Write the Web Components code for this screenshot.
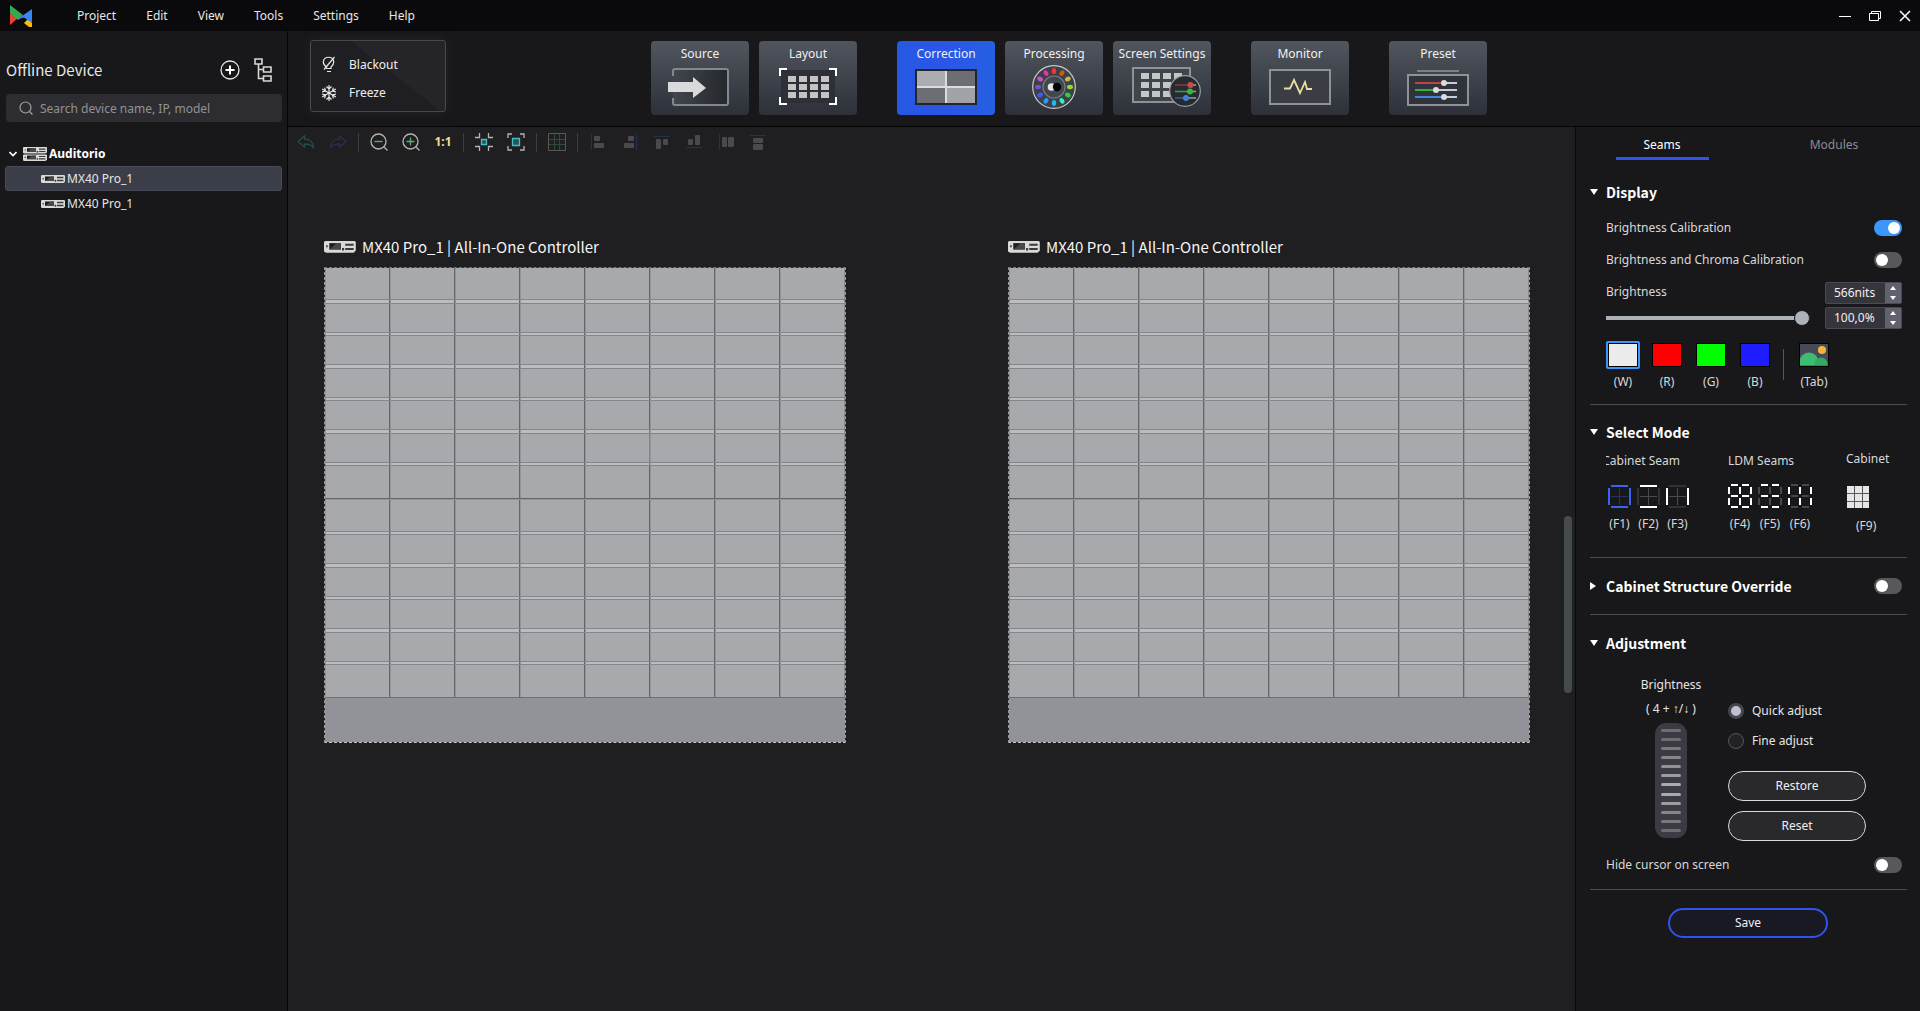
<!DOCTYPE html>
<html lang="en">
<head>
<meta charset="utf-8">
<title>Screen Correction</title>
<style>
html,body{margin:0;height:100%;background:#18181a}
body{font:12px/16px "Noto Sans","Open Sans",sans-serif;color:#e6e6e8;--head:"Noto Sans CJK SC","Noto Sans",sans-serif}
</style>
</head>
<body>
<control-app></control-app>
<script>
const define=(name,html,init)=>{
  const t=document.createElement('template');
  t.innerHTML=`<style>*{box-sizing:border-box}button,input{font:inherit;color:inherit;margin:0}button{background:none;border:0;padding:0}</style>`+html;
  customElements.define(name,class extends HTMLElement{
    connectedCallback(){
      if(this.shadowRoot)return;
      this.attachShadow({mode:'open'}).append(t.content.cloneNode(true));
      if(init)init(this,this.shadowRoot);
    }
  });
};

/* ---------- icons: [width, height, markup] ---------- */
const alignBox='fill="#4a4a4d"';
const device='<path fill="#d9d9d9" d="M1 0H29L30 1V9L28 11H2L0 10V1z"/><path fill="#1c1c1c" d="M5 2H16V8H5z"/><path fill="#454a45" d="M5 8L12 2H16V8z"/><path fill="#3a3a3a" d="M2 4h1.500v2H2zM17 6.500h2V9h-2zM20 2.500h8V4.500h-8zM20 6.500h8V8.500h-8z"/>';
const cells=(x,y,w,h,dx,dy)=>{let s='';for(let r=0;r<3;r++)for(let c=0;c<4;c++)s+=`<rect x="${x+c*dx}" y="${y+r*dy}" width="${w}" height="${h}"/>`;return s};
const hues=['#f23a35','#c8600f','#c9b93c','#8ae02a','#2fce3d','#2ef2c2','#23b8ee','#2b9df0','#3b5df5','#7a4ed0','#cf4fc4','#ee2fa8'];
const petals=hues.map((c,i)=>`<ellipse cx="22" cy="6" rx="2.200" ry="3" fill="${c}" transform="rotate(${i*30} 22 22)"/>`).join('');
const seam=(outH,outV,mid)=>`<g fill="none"><path stroke="${mid}" d="M3 11.500H20M11.500 3V20"/><path stroke="${outH}" stroke-width="${outH===mid?1:2}" d="M3 1H20M3 22H20"/><path stroke="${outV}" stroke-width="${outV===mid?1:2}" d="M1 3V20M22 3V20"/></g>`;
const ldm=(h,v)=>{const w=c=>c==='#fff'?2:1;return `<g fill="none"><path stroke="${v}" stroke-width="${w(v)}" d="M1 3V10M1 14V21M12 3V10M12 14V21M23 3V10M23 14V21"/><path stroke="${h}" stroke-width="${w(h)}" d="M3 1H10M14 1H21M3 12H10M14 12H21M3 23H10M14 23H21"/></g>`};
const ICONS={
 logo:[22,22,'<path fill="#ea4335" d="M0 8L8 13L0 20z"/><path fill="#fbbc05" d="M14 18L18 14L22 18V22H19z"/><path fill="#34a853" d="M0 0L13 10L8 15L0 8z"/><path fill="#3b82f6" d="M22 4V18L14 12.500L7 14.500L12 11z"/>'],
 min:[12,12,'<path stroke="#fff" d="M0 6.500H12"/>'],
 restore:[12,12,'<path fill="none" stroke="#fff" d="M.5 3.500H9.500V10.500H.5zM2.500 3.500V1.500H11.500V8.500H9.500"/>'],
 close:[12,12,'<path stroke="#fff" stroke-width="1.500" d="M1 1L11 11M11 1L1 11"/>'],
 add:[20,20,'<circle cx="10" cy="10" r="9" fill="none" stroke="#e8e8e8" stroke-width="1.300"/><path stroke="#fff" stroke-width="2" d="M10 5.500V14.500M5.500 10H14.500"/>'],
 tree:[18,24,'<path fill="none" stroke="#d8d8d8" stroke-width="1.600" d="M1 1H8V6H1zM4.500 6V20.500H9.500M4.500 11.500H9.500M9.500 9H17V14H9.500zM9.500 18H17V23H9.500z"/>'],
 search:[14,14,'<circle cx="6.500" cy="6.500" r="5.500" fill="none" stroke="#a0a0a4" stroke-width="1.200"/><path stroke="#a0a0a4" stroke-width="1.200" d="M10.500 10.500L13.500 13.500"/>'],
 chevron:[8,6,'<path fill="none" stroke="#fff" stroke-width="1.600" d="M.5 1L4 4.500L7.500 1"/>'],
 dev:[32,12,`<g transform="scale(1.060)">${device}</g>`], 
 devs:[24,8,`<g transform="scale(.8 .74)">${device}</g>`],
 stack:[24,14,`<g transform="scale(.8 .6)">${device}</g><g transform="translate(0 7.400) scale(.8 .6)">${device}</g>`],
 bulb:[14,17,'<g fill="none" stroke="#e8e8e8" stroke-width="1.200"><path d="M4.500 12.500V11C2 9.500 1.300 8 1.300 5.800A5.300 5.300 0 0 1 11.800 5.800C11.800 8 11 9.500 9 11V12.500"/><path d="M12.500 1L2 13.500M4.500 12.500H9.500M5 15.500H9"/></g>'],
 snow:[16,16,'<g fill="none" stroke="#e8e8e8" stroke-width="1.200">'+[0,60,120].map(a=>`<path transform="rotate(${a} 8 8)" d="M8 0V16M5.500 1.500L8 4L10.500 1.500M5.500 14.500L8 12L10.500 14.500"/>`).join('')+'</g>'],
 undo:[18,14,'<path fill="none" stroke="#1f4d50" stroke-width="1.300" d="M1 6.500L7.500 1V4C13 4.200 16.500 7.500 16.500 12.500C14.500 9.800 11.500 9 7.500 9V12z"/>'],
 redo:[18,14,'<path fill="none" stroke="#26314e" stroke-width="1.300" d="M17 6.500L10.500 1V4C5 4.200 1.500 7.500 1.500 12.500C3.500 9.800 6.500 9 10.500 9V12z"/>'],
 zout:[18,18,'<g fill="none" stroke="#b4b4b6" stroke-width="1.300"><circle cx="8.500" cy="8.500" r="7.500"/><path d="M14 14L17.500 17.500"/></g><path stroke="#5fae6c" stroke-width="1.300" d="M4.500 8.500H12.500"/>'],
 zin:[18,18,'<g fill="none" stroke="#b4b4b6" stroke-width="1.300"><circle cx="8.500" cy="8.500" r="7.500"/><path d="M14 14L17.500 17.500"/></g><path stroke="#5fae6c" stroke-width="1.300" d="M4.500 8.500H12.500M8.500 4.500V12.500"/>'],
 shrink:[18,18,'<path fill="none" stroke="#b4b4b6" stroke-width="1.300" d="M0 4.500H4.500V0M13.500 0V4.500H18M18 13.500H13.500V18M4.500 18V13.500H0"/><path fill="#2a5357" stroke="#3fc1c6" stroke-width="1.300" d="M6.500 6.500H11.500V11.500H6.500z"/>'],
 expand:[18,18,'<path fill="none" stroke="#b4b4b6" stroke-width="1.300" d="M1 5V1H5M13 1H17V5M17 13V17H13M5 17H1V13"/><path fill="#2a5357" stroke="#3fc1c6" stroke-width="1.300" d="M5.500 5.500H12.500V12.500H5.500z"/>'],
 grid:[18,18,'<g fill="none"><path stroke="#304a38" d="M6.500 1V17M11.500 1V17M1 6.500H17M1 11.500H17"/><path stroke="#58585c" d="M.5 .5H17.500V17.500H.5z"/></g>'],
 al:[16,16,`<path stroke="#263150" d="M1.500 0V16"/><g ${alignBox}><rect x="4" y="2" width="6" height="5" rx="1"/><rect x="4" y="9" width="10" height="5" rx="1"/></g>`],
 ar:[16,16,`<path stroke="#263150" d="M14.500 0V16"/><g ${alignBox}><rect x="6" y="2" width="6" height="5" rx="1"/><rect x="2" y="9" width="10" height="5" rx="1"/></g>`],
 at:[16,16,`<path stroke="#263150" d="M0 2.500H16"/><g ${alignBox}><rect x="2" y="5" width="5" height="10" rx="1"/><rect x="9" y="5" width="5" height="6" rx="1"/></g>`],
 ab:[16,16,`<path stroke="#263150" d="M0 13.500H16"/><g ${alignBox}><rect x="2" y="5" width="5" height="6" rx="1"/><rect x="9" y="1" width="5" height="10" rx="1"/></g>`],
 dh:[16,16,`<path stroke="#263150" d="M1.500 0V16"/><g ${alignBox}><rect x="4" y="3" width="5" height="10" rx="1"/><rect x="10" y="3" width="6" height="10" rx="1"/></g>`],
 dv:[16,16,`<path stroke="#263150" d="M0 1.500H16"/><g ${alignBox}><rect x="3" y="4" width="10" height="5" rx="1"/><rect x="3" y="10" width="10" height="6" rx="1"/></g>`],
 source:[66,38,'<defs><linearGradient id="g"><stop offset="0" stop-color="#42464e"/><stop offset="1" stop-color="#24272b"/></linearGradient></defs><path fill="url(#g)" d="M6 1H61V37H6z"/><path fill="none" stroke="#84878b" stroke-width="2" d="M6 8V3Q6 1 8 1H59Q61 1 61 3V35Q61 37 59 37H8Q6 37 6 35V30"/><path fill="#d9dadc" d="M1 14H26V9L39 20L26 30V24H1z"/>'],
 layout:[58,37,'<path fill="#2d3036" d="M2 2H56V35H2z"/><path fill="none" stroke="#fff" stroke-width="2" d="M1 8V1H8M50 1H57V8M57 29V36H50M8 36H1V29"/><g fill="#c5c4c5">'+cells(9,8,8,6,11,8)+'</g>'],
 correction:[62,36,'<path fill="#22252c" d="M0 0H62V36H0z"/><path fill="#abadb1" d="M2 2H30V17H2z"/><path fill="#6c6e73" d="M32 2H60V17H32zM2 19H30V34H2z"/><path fill="#a1a3a7" d="M32 19H60V34H32z"/><path fill="#dcdcdf" d="M30 2H32V34H30zM2 17H60V19H2z"/>'],
 processing:[44,44,'<circle cx="22" cy="22" r="21.300" fill="#3c4048" stroke="#c7c9cc" stroke-width="1.200"/>'+petals+'<circle cx="22" cy="22" r="11" fill="#42464d" stroke="#787b80" stroke-width="1.200"/><circle cx="19.500" cy="22" r="3.800" fill="#e8e4e4"/><circle cx="25" cy="22" r="4.200" fill="#000"/>'],
 screens:[78,40,'<g transform="translate(8 0)"><path fill="#40444b" stroke="#8e9196" stroke-width="2" d="M2 1H59V35H2z"/><g fill="#c5c6c8">'+cells(10,6,8,6,11,9)+'</g><circle cx="54" cy="24" r="15.300" fill="#272b31" stroke="#9b9da1" stroke-width="1.200"/><path stroke="#9b9da1" stroke-width="1.500" d="M58 18H65M58 24.500H65M54 31H65"/><path stroke="#8c3a3f" stroke-width="1.500" d="M44 18H58"/><path stroke="#2fa63a" stroke-width="1.500" d="M44 24.500H58"/><path stroke="#34629e" stroke-width="1.500" d="M44 31H55"/><circle cx="59.500" cy="18" r="3" fill="#d04a4a"/><circle cx="59" cy="24.500" r="3" fill="#34b83c"/><circle cx="55" cy="31" r="3" fill="#3f82d8"/></g>'],
 monitor:[62,36,'<path fill="#3a3d44" stroke="#8e9196" stroke-width="2" d="M1 1H61V35H1z"/><path fill="none" stroke="#e7df9e" stroke-width="1.800" d="M15 19.500H21L25 11L31 24L36 13L38 20H43"/>'],
 preset:[62,38,'<path stroke="#7d8087" stroke-width="2" d="M10 3H52"/><path fill="#30333a" stroke="#8e9196" stroke-width="2" d="M1 7H61V37H1z"/><path stroke="#c3ccd8" stroke-width="2" d="M8 15H50M8 22H50M8 29H50"/><path stroke="#bf4347" stroke-width="2" d="M8 15H37"/><path stroke="#33b238" stroke-width="2" d="M8 22H29"/><path stroke="#4387dc" stroke-width="2" d="M8 29H37"/><g fill="#dcdcde"><circle cx="37" cy="15" r="3"/><circle cx="29" cy="22" r="3"/><circle cx="37" cy="29" r="3"/></g>'],
 down:[8,6,'<path fill="#fff" d="M0 0H8L4 6z"/>'],
 right:[6,8,'<path fill="#fff" d="M0 0L6 4L0 8z"/>'],
 f1:[23,23,seam('#3c63f0','#3c63f0','#26335f')],
 f2:[23,23,seam('#fff','#4a4a4e','#4a4a4e')],
 f3:[23,23,seam('#4a4a4e','#fff','#4a4a4e')],
 f4:[24,24,ldm('#fff','#fff')], f5:[24,24,ldm('#fff','#77777a')], f6:[24,24,ldm('#77777a','#fff')],
 f9:[22,22,'<path fill="#e6e6e6" d="M0 0H22V22H0z"/><path stroke="#58585a" d="M7.500 0V22M15.500 0V22M0 7.500H22M0 15.500H22"/>'],
 scene:[28,22,'<path fill="#474b58" d="M0 0H28V22H0z"/><circle cx="22" cy="6" r="4" fill="#f2b43c"/><circle cx="9" cy="18" r="9.500" fill="#3dbd74"/><circle cx="21" cy="20" r="6.500" fill="#35a764"/><path fill="#2b8f55" d="M0 21H28V22H0z"/>']
};
define('ui-icon','<style>:host{display:block;flex:none;line-height:0}svg{display:block;overflow:hidden}</style>',(el,r)=>{
  const [w,h,m]=ICONS[el.getAttribute('name')];
  r.innerHTML+=`<svg width="${w}" height="${h}" viewBox="0 0 ${w} ${h}" aria-hidden="true">${m}</svg>`;
});

/* ---------- small controls ---------- */
define('toggle-switch',`<style>
:host{display:flex;align-items:center;justify-content:space-between;min-height:16px}
input{appearance:none;width:28px;height:16px;border-radius:8px;background:#58585a;display:flex;align-items:center;padding:0 2px;flex:none}
input::before{content:"";width:12px;height:12px;border-radius:50%;background:#fff}
input:checked{background:#3b97fb;justify-content:flex-end}
</style><label for="t"><slot></slot></label><input id="t" type="checkbox" role="switch">`,(el,r)=>{
  const i=r.querySelector('input');i.checked=el.hasAttribute('on');i.ariaLabel=el.textContent||el.getAttribute('label');});

define('spin-box',`<style>
:host{display:flex;width:77px;height:22px;border:1px solid #4a4a54;border-radius:2px;background:#35353c}
input{width:59px;border:0;background:none;padding:0 0 0 8px;outline:0;color:#f0f0f0}
div{flex:1;display:flex;flex-direction:column;background:#62626e}
button{flex:1;display:flex;align-items:center;justify-content:center}
svg{display:block}
</style><input type="text"><div><button aria-label="Increase"><svg width="6" height="4"><path fill="#fff" d="M0 4L3 0L6 4z"/></svg></button><button aria-label="Decrease"><svg width="6" height="4"><path fill="#fff" d="M0 0H6L3 4z"/></svg></button></div>`,(el,r)=>{
  const i=r.querySelector('input');i.value=el.getAttribute('value');i.ariaLabel=el.getAttribute('label');});

define('pill-button',`<style>
:host{display:block}
button{width:100%;height:30px;border-radius:15px;border:1px solid #dadada;background:#29292b;color:#f0f0f0}
:host([primary]) button{border:2px solid #2f54eb;background:#191924}
</style><button><slot></slot></button>`);

define('color-swatch',`<style>
:host{display:block}
button{display:flex;flex-direction:column;align-items:center;gap:5px;width:34px}
i{display:block;width:34px;height:28px;padding:1px;border-radius:2px;border:1px solid transparent}
:host([selected]) i{border:2px solid #3b97fb;padding:0}
b{display:block;height:100%;border:1px solid #000;background:var(--c)}
</style><button><i><b><slot name="pic"></slot></b></i><slot></slot></button>`,(el)=>{el.style.setProperty('--c',el.getAttribute('color')||'#000')});

define('mode-button',`<style>
:host{display:block}
button{display:flex;flex-direction:column;align-items:center;gap:8px}
:host([lead]) button{align-items:flex-start;gap:9px}
:host([lead]) button>slot{display:block;margin-left:9px}
span{display:flex;height:24px;align-items:center}
</style><button><span></span><slot></slot></button>`,(el,r)=>{r.querySelector('span').innerHTML=`<ui-icon name="${el.getAttribute('icon')}"></ui-icon>`});

define('tool-card',`<style>
:host{display:block}
button{width:98px;height:74px;border-radius:4px;background:linear-gradient(#50555e,#2d3038);display:flex;flex-direction:column;align-items:center;color:#f0f0f2;padding:5px 0 4px;white-space:nowrap}
:host([active]) button{background:linear-gradient(90deg,#2559e2,#2c55e8 50%,#2560e0)}
span{flex:1;display:flex;align-items:center;justify-content:center}
</style><button><slot></slot><span></span></button>`,(el,r)=>{r.querySelector('span').innerHTML=`<ui-icon name="${el.getAttribute('icon')}"></ui-icon>`});

/* ---------- regions ---------- */
define('menu-bar',`<style>
:host{display:flex;align-items:center;height:31px;background:#0a0a0c;padding:0 9px 0 10px}
nav{display:flex;gap:30px;margin-left:45px;flex:1}
.w{display:flex;gap:18px}
.w button{display:block}
</style><ui-icon name="logo"></ui-icon><nav><button>Project</button><button>Edit</button><button>View</button><button>Tools</button><button>Settings</button><button>Help</button></nav>
<div class="w"><button aria-label="Minimise"><ui-icon name="min"></ui-icon></button><button aria-label="Restore"><ui-icon name="restore"></ui-icon></button><button aria-label="Close"><ui-icon name="close"></ui-icon></button></div>`);

define('device-list',`<style>
:host{display:block;background:#18181a;padding:27px 5px 0}
header{display:flex;align-items:center;gap:14px;height:24px;padding:0 10px 0 1px}
h1{flex:1;margin:0;font:15px/20px var(--head)}
header button{display:block}
.s{display:flex;align-items:center;gap:7px;height:28px;margin:12px 0 0 1px;padding:0 13px;background:#2d2d31;border-radius:4px}
input{flex:1;min-width:0;border:0;background:none;outline:0;padding:1px 0 0}
input::placeholder{color:#929296;opacity:1}
ul{list-style:none;margin:19px 0 0;padding:0}
li button{display:flex;align-items:center;width:100%;height:25px;gap:2px;padding-left:35px;border:1px solid transparent;border-radius:3px;white-space:nowrap}
li .p{padding-left:3px;gap:2px;font-weight:bold;color:#fff}
.p ui-icon+ui-icon{margin-left:4px}
li .sel{background:#3b3d49;border-color:#474a58}
</style>
<header><h1>Offline Device</h1><button aria-label="Add device"><ui-icon name="add"></ui-icon></button><button aria-label="Topology"><ui-icon name="tree"></ui-icon></button></header>
<label class="s"><ui-icon name="search"></ui-icon><input type="text" aria-label="Search" placeholder="Search device name, IP, model"></label>
<ul><li><button class="p"><ui-icon name="chevron"></ui-icon><ui-icon name="stack"></ui-icon>Auditorio</button></li>
<li><button class="sel"><ui-icon name="devs"></ui-icon>MX40 Pro_1</button></li>
<li><button><ui-icon name="devs"></ui-icon>MX40 Pro_1</button></li></ul>`);

define('top-ribbon',`<style>
:host{display:flex;align-items:flex-start;height:95px;padding:9px 0 0 22px;background:#18181a}
.q{width:136px;height:72px;border:1px solid #48484e;border-radius:3px;background:linear-gradient(38deg,#1f1f23 58%,#252529 58%);box-shadow:0 0 10px #232327;display:flex;flex-direction:column;justify-content:center;gap:4px;padding:5px 10px 0}
.q button{display:flex;align-items:center;gap:12px;height:24px;color:#f0f0f2}
.q span{width:16px;display:flex;justify-content:center}
.a{flex:205}.b{flex:433}
.g{display:flex;gap:40px;padding-top:1px}
.g div{display:flex;gap:10px}
</style>
<div class="q"><button><span><ui-icon name="bulb"></ui-icon></span>Blackout</button><button><span><ui-icon name="snow"></ui-icon></span>Freeze</button></div>
<div class="a"></div>
<div class="g"><div><tool-card icon="source">Source</tool-card><tool-card icon="layout">Layout</tool-card></div>
<div><tool-card icon="correction" active>Correction</tool-card><tool-card icon="processing">Processing</tool-card><tool-card icon="screens">Screen Settings</tool-card></div>
<div><tool-card icon="monitor">Monitor</tool-card></div><div><tool-card icon="preset">Preset</tool-card></div></div>
<div class="b"></div>`);

define('canvas-tools',`<style>
:host{display:flex;align-items:center;height:30px;padding-left:2px}
button{width:32px;height:24px;display:flex;align-items:center;justify-content:center}
.r{font:bold 12px/16px "Noto Sans",sans-serif;color:#f5dd8c}
hr{width:1px;height:19px;border:0;background:#3f3f43;margin:0 4px}
</style>`,(el,r)=>{
  const b=(n,l)=>`<button aria-label="${l}"><ui-icon name="${n}"></ui-icon></button>`;
  r.innerHTML+=b('undo','Undo')+b('redo','Redo')+'<hr>'+b('zout','Zoom out')+b('zin','Zoom in')+'<button class="r">1:1</button><hr>'+b('shrink','Fit content')+b('expand','Fit window')+'<hr>'+b('grid','Grid')+'<hr>'+b('al','Align left')+b('ar','Align right')+b('at','Align top')+b('ab','Align bottom')+b('dh','Distribute horizontally')+b('dv','Distribute vertically');
});

define('led-wall',`<style>
:host{display:block;width:522px}
h2{display:flex;align-items:center;gap:6px;height:20px;margin:0 0 10px;font:15px/20px var(--head);color:#f4f4f4;white-space:nowrap}
.w{background:#929398 padding-box;border:1px dashed #9c9ca0;border-top-color:#77777b;border-bottom-color:#c4c4c8}
.r,.s{display:grid;grid-template-columns:repeat(8,1fr)}
.r i,.s i{border-right:1px solid #646569;box-shadow:inset 1px 0 #939498}
.r{background:#a8a9ad;height:28px}
.r i:last-child,.s i:last-child{border-right-color:#8c8d91}
.s{background:#bcbcc1;border:1px solid #85868b;border-width:1px 0;height:4px}
.s.big{height:5px}
.s.one{height:2px;border:0;background:#646569;border-bottom:1px solid #95969a}
.r.first{height:31px}.r.tall{height:32px}.r.mid{height:31px}
.end{height:1px;background:#6f7074}
.base{height:44px}
.r .hot{position:relative;border-right-color:#2f9bf5}
.r .hot::after{content:"";position:absolute;right:-1px;top:-4px;bottom:-3px;width:1px;background:#2f9bf5}
</style><h2><ui-icon name="dev"></ui-icon><span><slot></slot></span></h2><div class="w"></div>`,(el,r)=>{
  const row=hot=>Array.from({length:8},(_,c)=>`<i${hot&&c===4?' class="hot"':''}></i>`).join('');
  const seams=['big','','big','','big','','one','','big','','big','','end'];
  const tall={0:'first',6:'tall',7:'mid',12:'tall'};
  let h='';
  seams.forEach((s,k)=>{
    h+=`<div class="r ${tall[k]||''}">${row(el.hasAttribute('hot')&&k===5)}</div>`;
    h+=s==='end'?'<div class="end"></div>':`<div class="s ${s}">${s==='one'?'':row(false)}</div>`;
  });
  r.querySelector('.w').innerHTML=h+'<div class="base"></div>';
});

define('work-canvas',`<style>
:host{display:block;position:relative;background:#1f1f21;overflow:hidden}
.c{display:flex;gap:162px;padding:80px 0 0 36px}
.bar{position:absolute;right:3px;top:44%;height:20%;width:8px;border-radius:4px;background:#454a4f}
</style><canvas-tools></canvas-tools><div class="c"><led-wall hot>MX40 Pro_1 | All-In-One Controller</led-wall><led-wall>MX40 Pro_1 | All-In-One Controller</led-wall></div><div class="bar"></div>`);

define('panel-section',`<style>
:host{display:block;margin:0 13px 0 14px;padding:0 5px 0 0;border-bottom:1px solid #4b4a55}
header{display:flex;align-items:center;height:20px}
header span{width:16px}
h3{flex:1;margin:0;font:bold 14px/20px var(--head);color:#fff}
.b{padding-left:16px}
</style><header><span></span><h3></h3><slot name="side"></slot></header><div class="b"><slot></slot></div>`,(el,r)=>{
  r.querySelector('h3').textContent=el.getAttribute('heading');
  r.querySelector('span').innerHTML=`<ui-icon name="${el.hasAttribute('closed')?'right':'down'}"></ui-icon>`;
});

define('thumb-wheel',`<style>
:host{display:flex;flex-direction:column;justify-content:space-between;width:32px;height:115px;padding:6px;border-radius:11px;background:#3b3b44}
i{height:3px;border-radius:2px}
</style>`,(el,r)=>{r.innerHTML+=[0,0,1,2,3,4,5,5,4,2,1,0].map(v=>`<i style="background:rgb(${110+v*12} ${110+v*12} ${114+v*12})"></i>`).join('')});

define('side-panel',`<style>
:host{display:block;background:#18181a;border-left:1px solid #08080a}
.tabs{display:flex;height:33px;margin-bottom:22px}
.tabs button{flex:1;display:flex;flex-direction:column;align-items:center;justify-content:space-between;padding-top:10px;color:#8c8c90}
.tabs .on{color:#fff}
.tabs .on::after{content:"";width:93px;height:3px;background:#2f54eb}
panel-section{margin-bottom:18px}
.disp{padding-bottom:14px;margin-bottom:17px}
toggle-switch{color:#d8d8da}
.d1{margin-top:18px}.d2{margin-top:16px}
.br{display:flex;justify-content:space-between;margin-top:14px;color:#d8d8da}
.br>div{display:flex;flex-direction:column}
.sp{gap:3px}
.sl{gap:10px;padding-top:2px}
input[type=range]{appearance:none;width:204px;height:16px;background:linear-gradient(#adb1ba,#adb1ba) center/100% 4px no-repeat}
input[type=range]::-webkit-slider-thumb{appearance:none;width:16px;height:16px;border-radius:50%;background:#adb1ba;border:1px solid #18181a}
.sw{display:flex;gap:10px;margin-top:12px;color:#d8d8da}
.sw hr{width:1px;height:31px;border:0;background:#55555f;margin:8px 3px 0 1px}
.modes{display:flex;margin-top:9px;padding-bottom:23px;color:#d8d8da}
.modes div>span{display:block;height:16px;white-space:nowrap}
.m1{width:122px}.m2{width:118px}
.m1,.m2{padding-top:2px}
.m1>span{width:74px;overflow:hidden;direction:rtl}
.ic{display:flex;gap:6px;margin-top:15px}
.m1 .ic{margin-left:2px}
.m3 .ic{margin-top:18px;margin-left:1px}
.over{padding-bottom:18px}
.adj{display:flex;margin-top:23px}
.wh{width:108px;display:flex;flex-direction:column;align-items:center;gap:8px;padding-left:22px;margin:1px 14px 0 0;white-space:nowrap}
thumb-wheel{margin-top:-2px}
.op{display:flex;flex-direction:column;width:138px;padding-top:27px}
.op label{display:flex;align-items:center;gap:8px;height:16px;margin-bottom:14px}
.op input{appearance:none;width:16px;height:16px;border-radius:50%;border:1px solid #56565e;background:#222223}
.op input:checked{border:3px solid #45454f;background:#c0c0cc}
.op pill-button{margin-bottom:10px}
.op .first{margin-top:8px}
.hide{margin-top:6px;padding-bottom:16px}
.save{width:160px;margin:0 auto}
</style>
<div class="tabs"><button class="on">Seams</button><button>Modules</button></div>
<panel-section heading="Display" class="disp">
<toggle-switch on class="d1">Brightness Calibration</toggle-switch>
<toggle-switch class="d2">Brightness and Chroma Calibration</toggle-switch>
<div class="br"><div class="sl"><label for="b">Brightness</label><input id="b" type="range" value="100"></div>
<div class="sp"><spin-box value="566nits" label="Brightness in nits"></spin-box><spin-box value="100,0%" label="Brightness in percent"></spin-box></div></div>
<div class="sw"><color-swatch color="#ececec" selected>(W)</color-swatch><color-swatch color="#f00">(R)</color-swatch><color-swatch color="#0f0">(G)</color-swatch><color-swatch color="#1d1dff">(B)</color-swatch><hr><color-swatch><ui-icon slot="pic" name="scene"></ui-icon>(Tab)</color-swatch></div>
</panel-section>
<panel-section heading="Select Mode"><div class="modes">
<div class="m1"><span>Cabinet Seam</span><div class="ic"><mode-button icon="f1">(F1)</mode-button><mode-button icon="f2">(F2)</mode-button><mode-button icon="f3">(F3)</mode-button></div></div>
<div class="m2"><span>LDM Seams</span><div class="ic"><mode-button icon="f4">(F4)</mode-button><mode-button icon="f5">(F5)</mode-button><mode-button icon="f6">(F6)</mode-button></div></div>
<div class="m3"><span>Cabinet</span><div class="ic"><mode-button icon="f9" lead>(F9)</mode-button></div></div></div></panel-section>
<panel-section heading="Cabinet Structure Override" closed class="over"><toggle-switch slot="side" label="Cabinet Structure Override"></toggle-switch></panel-section>
<panel-section heading="Adjustment"><div class="adj">
<div class="wh"><span>Brightness</span><span>( 4 + ↑/↓ )</span><thumb-wheel></thumb-wheel></div>
<div class="op"><label><input type="radio" name="a" checked>Quick adjust</label><label><input type="radio" name="a">Fine adjust</label><pill-button class="first">Restore</pill-button><pill-button>Reset</pill-button></div></div>
<toggle-switch class="hide">Hide cursor on screen</toggle-switch></panel-section>
<pill-button class="save" primary>Save</pill-button>`);

define('control-app',`<style>
:host{display:grid;min-height:100vh;grid-template:31px 1fr/287px 1fr}
menu-bar{grid-column:1/3}
main{display:grid;grid-template:96px 1fr/1fr 345px;border-left:1px solid #050506}
top-ribbon{grid-column:1/3;height:auto;border-bottom:1px solid #050506}
</style><menu-bar></menu-bar><device-list></device-list><main><top-ribbon></top-ribbon><work-canvas></work-canvas><side-panel></side-panel></main>`);
</script>
</body>
</html>
